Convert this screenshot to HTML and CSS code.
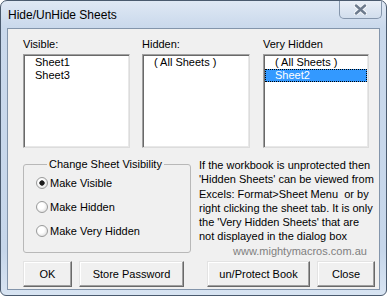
FILE: index.html
```html
<!DOCTYPE html>
<html lang="en">
<head>
  <meta charset="UTF-8">
  <title>Hide/UnHide Sheets</title>
  <link rel="stylesheet" href="styles.css">
</head>
<body>

  <div class="window">
    <div class="titlebar">
      <div class="title">Hide/UnHide Sheets</div>
      <div class="close-btn">
        <svg width="13" height="11" viewBox="0 0 13 11">
          <path d="M2 1.5 L11 9.5 M11 1.5 L2 9.5" stroke="#f4f7fb" stroke-width="4.5" stroke-linecap="round"/>
          <path d="M2 1.5 L11 9.5 M11 1.5 L2 9.5" stroke="#6d7b8d" stroke-width="2.4" stroke-linecap="round"/>
        </svg>
      </div>
    </div>

    <div class="client">
      <div class="lists">
        <div class="col">
          <div class="col-label">Visible:</div>
          <div class="listbox">
            <div class="item">Sheet1</div>
            <div class="item">Sheet3</div>
          </div>
        </div>
        <div class="col">
          <div class="col-label">Hidden:</div>
          <div class="listbox">
            <div class="item">( All Sheets )</div>
          </div>
        </div>
        <div class="col col-last">
          <div class="col-label">Very Hidden</div>
          <div class="listbox">
            <div class="item">( All Sheets )</div>
            <div class="item selected">Sheet2</div>
          </div>
        </div>
      </div>

      <div class="lower">
        <fieldset class="group">
          <legend>Change Sheet Visibility</legend>
          <label class="radio-row"><input type="radio" name="vis" checked> Make Visible</label>
          <label class="radio-row"><input type="radio" name="vis"> Make Hidden</label>
          <label class="radio-row"><input type="radio" name="vis"> Make Very Hidden</label>
        </fieldset>

        <div class="note">
          <div>If the workbook is unprotected then</div>
          <div>'Hidden Sheets' can be viewed from</div>
          <div>Excels: Format&gt;Sheet Menu &nbsp;or by</div>
          <div>right clicking the sheet tab. It is only</div>
          <div>the 'Very Hidden Sheets' that are</div>
          <div>not displayed in the dialog box</div>
          <div class="site">www.mightymacros.com.au</div>
        </div>
      </div>

      <div class="buttons">
        <button class="btn btn-ok">OK</button>
        <button class="btn btn-store">Store Password</button>
        <button class="btn btn-protect">un/Protect Book</button>
        <button class="btn btn-close">Close</button>
      </div>
    </div>
  </div>

</body>
</html>
```

FILE: styles.css
```css
body {
  margin: 0;
  background: #fff;
  font-family: "Liberation Sans", Arial, sans-serif;
  font-size: 11px;
  color: #000;
}

.window {
  width: 387px;
  height: 296px;
  box-sizing: border-box;
  border: 1px solid #4a5a6e;
  border-radius: 7px 7px 6px 6px;
  background: linear-gradient(#dfe8f4, #cad9ec 26px, #c6d6ea 250px, #d8e4f2);
  display: flex;
  flex-direction: column;
  overflow: hidden;
}

.titlebar {
  height: 27px;
  display: flex;
  align-items: flex-start;
}
.title {
  font-size: 12px;
  line-height: 14px;
  margin: 7px 0 0 7px;
}
.close-btn {
  margin-left: auto;
  margin-right: 4px;
  width: 43px;
  height: 18px;
  box-sizing: border-box;
  border: 1px solid #8596ac;
  border-top: none;
  border-radius: 0 0 5px 5px;
  background: linear-gradient(#e9eff7, #d2deed);
  display: flex;
  align-items: center;
  justify-content: center;
}

.client {
  margin: 0 6px;
  height: 262px;
  box-sizing: border-box;
  border: 1px solid #8395ab;
  background: #f0f0f0;
  padding: 9px 0 0 15px;
}

.lists {
  display: grid;
  grid-template-columns: 107px 108px 107px;
  column-gap: 12px;
}
.col-last { margin-left: 1px; }
.col-label {
  height: 13px;
  line-height: 13px;
  margin-bottom: 3px;
}
.listbox {
  height: 94px;
  box-sizing: border-box;
  background: #fff;
  border: 1px solid #a0a0a0;
  border-color: #a0a0a0 #dcdcdc #dcdcdc #a0a0a0;
  box-shadow: inset 1px 1px #696969, inset -1px -1px #e8e8e8;
  padding: 1px;
}
.item {
  line-height: 13px;
  padding-left: 10px;
  white-space: nowrap;
}
.item.selected {
  background: #3399ff;
  color: #fff;
  outline: 1px dotted #000;
  outline-offset: -1px;
}

.lower {
  display: flex;
  align-items: flex-start;
  height: 95px;
  margin-top: 10px;
}
.group {
  width: 168px;
  height: 95px;
  box-sizing: border-box;
  margin: 0;
  padding: 0 0 0 12px;
  border: 1px solid #b8b8b8;
  border-radius: 3px;
}
.group legend {
  margin-left: 11px;
  padding: 0 2px;
  line-height: 13px;
}
.radio-row {
  display: flex;
  align-items: center;
  height: 24px;
  gap: 2px;
}
.radio-row input {
  appearance: none;
  -webkit-appearance: none;
  margin: 0;
  width: 12px;
  height: 12px;
  border: 1px solid #9a9b9b;
  border-radius: 50%;
  background: radial-gradient(circle at 40% 40%, #fff 0 3px, #e6e6e6 6px);
}
.radio-row input:checked {
  background: radial-gradient(circle, #1b1b1b 0 2px, #555 2.5px, transparent 3px),
    radial-gradient(circle at 40% 40%, #fff 0 3px, #e6e6e6 6px);
}

.note {
  margin-left: 8px;
  line-height: 14.3px;
  white-space: nowrap;
}
.site {
  color: #7f7f7f;
  padding-left: 34px;
}

.buttons {
  display: flex;
  margin-top: 8px;
}
.btn {
  height: 26px;
  box-sizing: border-box;
  padding: 0;
  font-family: inherit;
  font-size: 11px;
  color: #000;
  background: #f0f0f0;
  border: 1px solid;
  border-color: #e3e3e3 #696969 #696969 #e3e3e3;
  box-shadow: inset -1px -1px #a0a0a0, inset 1px 1px #fff;
  border-radius: 0;
}
.btn-ok { width: 49px; }
.btn-store { width: 105px; margin-left: 7px; }
.btn-protect { width: 103px; margin-left: 23px; }
.btn-close { width: 58px; margin-left: 7px; }
```
